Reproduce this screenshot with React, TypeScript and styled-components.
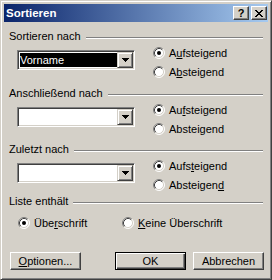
import React from 'react'
import styled, { createGlobalStyle, css } from 'styled-components'

const GlobalStyle = createGlobalStyle`
  html, body {
    margin: 0;
    padding: 0;
    background: #d4d0c8;
  }
  body {
    font-family: "Liberation Sans", Arial, sans-serif;
    font-size: 11px;
    color: #000;
  }
`

const Window = styled.div`
  box-sizing: border-box;
  width: 272px;
  height: 280px;
  background: #d4d0c8;
  border: 1px solid;
  border-color: #d4d0c8 #404040 #404040 #d4d0c8;
  box-shadow: inset 1px 1px #ffffff, inset -1px -1px #808080;
  padding: 3px;
  display: flex;
  flex-direction: column;
`

const TitleBar = styled.div`
  height: 18px;
  display: flex;
  align-items: center;
  padding: 0 1px 0 2px;
  background: linear-gradient(to right, #0a246a, #a6caf0);
`

const Title = styled.span`
  flex: 1;
  color: #fff;
  font-weight: bold;
  font-size: 11.5px;
  line-height: 18px;
`

const CaptionButton = styled.div<{ $gap?: number }>`
  box-sizing: border-box;
  width: 16px;
  height: 14px;
  margin-left: ${p => p.$gap ?? 0}px;
  background: #d4d0c8;
  border: 1px solid;
  border-color: #fff #404040 #404040 #fff;
  box-shadow: inset -1px -1px #808080;
  display: flex;
  align-items: center;
  justify-content: center;
  font-weight: bold;
  font-size: 11px;
  line-height: 12px;
  color: #000;
`

const Content = styled.div`
  display: flex;
  flex-direction: column;
  padding: 7px 5px 0 5px;
`

const GroupHeader = styled.div<{ $top: number }>`
  display: flex;
  height: 14px;
  line-height: 14px;
  margin-top: ${p => p.$top}px;
`

const GroupLine = styled.div`
  flex: 1;
  align-self: flex-start;
  margin: 8px 0 0 5px;
  border-top: 1px solid #808080;
  border-bottom: 1px solid #ffffff;
`

const GroupBody = styled.div<{ $indent: number }>`
  display: flex;
  padding-left: ${p => p.$indent}px;
`

const Combo = styled.div`
  box-sizing: border-box;
  width: 118px;
  height: 20px;
  margin-top: 7px;
  padding: 1px;
  background: #fff;
  border: 1px solid;
  border-color: #808080 #ffffff #ffffff #808080;
  box-shadow: inset 1px 1px #404040, inset -1px -1px #d4d0c8;
  display: flex;
`

const ComboField = styled.div`
  flex: 1;
  padding: 1px 0 1px 1px;
  display: flex;
`

const ComboText = styled.span<{ $selected?: boolean }>`
  flex: 1;
  line-height: 14px;
  ${p =>
    p.$selected &&
    css`
      background: #000;
      color: #fff;
    `}
`

const DropButton = styled.div`
  box-sizing: border-box;
  width: 16px;
  height: 16px;
  background: #d4d0c8;
  border: 1px solid;
  border-color: #d4d0c8 #404040 #404040 #d4d0c8;
  box-shadow: inset 1px 1px #ffffff, inset -1px -1px #808080;
  display: flex;
  align-items: center;
  justify-content: center;
`

const RadioColumn = styled.div`
  display: flex;
  flex-direction: column;
  margin-left: 18px;
`

const RadioRow = styled.div<{ $width?: number; $top?: number }>`
  display: flex;
  align-items: center;
  height: 19px;
  margin-top: ${p => p.$top ?? 0}px;
  width: ${p => (p.$width ? `${p.$width}px` : 'auto')};
`

const RadioLabel = styled.span`
  margin-left: 4px;
  line-height: 14px;
`

const ButtonRow = styled.div`
  display: flex;
  margin: 20px -1px 0 1px;
`

const Button = styled.div<{ $default?: boolean; $auto?: boolean }>`
  box-sizing: border-box;
  width: 71px;
  height: 18px;
  margin-left: ${p => (p.$auto ? 'auto' : '7px')};
  background: #d4d0c8;
  border: 1px solid;
  border-color: #ffffff #404040 #404040 #ffffff;
  box-shadow: inset -1px -1px #808080;
  display: flex;
  align-items: center;
  justify-content: center;
  line-height: 14px;
  ${p =>
    p.$default &&
    css`
      border-color: #000;
      box-shadow: inset 1px 1px #ffffff, inset -1px -1px #404040, inset -2px -2px #808080;
    `}
`

const FirstButton = styled(Button)`
  margin-left: 0;
`

const closeGlyph = [
  '##....##',
  '.##..##.',
  '..####..',
  '...##...',
  '..####..',
  '.##..##.',
  '##....##',
]

function CloseIcon() {
  return (
    <svg width="8" height="7" viewBox="0 0 8 7" shapeRendering="crispEdges">
      {closeGlyph.map((row, y) =>
        row.split('').map((c, x) =>
          c === '#' ? <rect key={`${x}-${y}`} x={x} y={y} width="1" height="1" fill="#000" /> : null
        )
      )}
    </svg>
  )
}

function Arrow() {
  return (
    <svg width="7" height="4" viewBox="0 0 7 4" shapeRendering="crispEdges">
      <path d="M0 0h7v1H0zM1 1h5v1H1zM2 2h3v1H2zM3 3h1v1H3z" fill="#000" />
    </svg>
  )
}

function RadioMark({ checked }: { checked?: boolean }) {
  return (
    <svg width="12" height="12" viewBox="0 0 12 12">
      <circle cx="6" cy="6" r="5" fill="#fff" />
      <path d="M2.11 9.89A5.5 5.5 0 0 1 9.89 2.11" fill="none" stroke="#808080" />
      <path d="M9.89 2.11A5.5 5.5 0 0 1 2.11 9.89" fill="none" stroke="#ffffff" />
      <path d="M2.82 9.18A4.5 4.5 0 0 1 9.18 2.82" fill="none" stroke="#404040" />
      <path d="M9.18 2.82A4.5 4.5 0 0 1 2.82 9.18" fill="none" stroke="#d4d0c8" />
      {checked && <circle cx="6" cy="6" r="2" fill="#000" />}
    </svg>
  )
}

function Radio({ checked, children, width, top }: { checked?: boolean; children: React.ReactNode; width?: number; top?: number }) {
  return (
    <RadioRow $width={width} $top={top}>
      <RadioMark checked={checked} />
      <RadioLabel>{children}</RadioLabel>
    </RadioRow>
  )
}

const sections = [
  { title: 'Sortieren nach', top: 0, value: 'Vorname', up: <>A<u>u</u>fsteigend</>, down: <>A<u>b</u>steigend</> },
  { title: 'Anschließend nach', top: 5, value: '', up: <>Au<u>f</u>steigend</>, down: <>Abstei<u>g</u>end</> },
  { title: 'Zuletzt nach', top: 4, value: '', up: <>Aufs<u>t</u>eigend</>, down: <>Absteigen<u>d</u></> },
]

export default function App() {
  return (
    <>
      <GlobalStyle />
      <Window>
        <TitleBar>
          <Title>Sortieren</Title>
          <CaptionButton>?</CaptionButton>
          <CaptionButton $gap={2}>
            <CloseIcon />
          </CaptionButton>
        </TitleBar>
        <Content>
          {sections.map(s => (
            <React.Fragment key={s.title}>
              <GroupHeader $top={s.top}>
                <span>{s.title}</span>
                <GroupLine />
              </GroupHeader>
              <GroupBody $indent={8}>
                <Combo>
                  <ComboField>
                    <ComboText $selected={!!s.value}>{s.value}</ComboText>
                  </ComboField>
                  <DropButton>
                    <Arrow />
                  </DropButton>
                </Combo>
                <RadioColumn>
                  <Radio checked>{s.up}</Radio>
                  <Radio>{s.down}</Radio>
                </RadioColumn>
              </GroupBody>
            </React.Fragment>
          ))}
          <GroupHeader $top={0}>
            <span>Liste enthält</span>
            <GroupLine />
          </GroupHeader>
          <GroupBody $indent={9}>
            <Radio checked width={104} top={5}>
              Übe<u>r</u>schrift
            </Radio>
            <Radio top={5}>
              <u>K</u>eine Überschrift
            </Radio>
          </GroupBody>
          <ButtonRow>
            <FirstButton>
              <span>
                <u>O</u>ptionen...
              </span>
            </FirstButton>
            <Button $default $auto>
              OK
            </Button>
            <Button>Abbrechen</Button>
          </ButtonRow>
        </Content>
      </Window>
    </>
  )
}
